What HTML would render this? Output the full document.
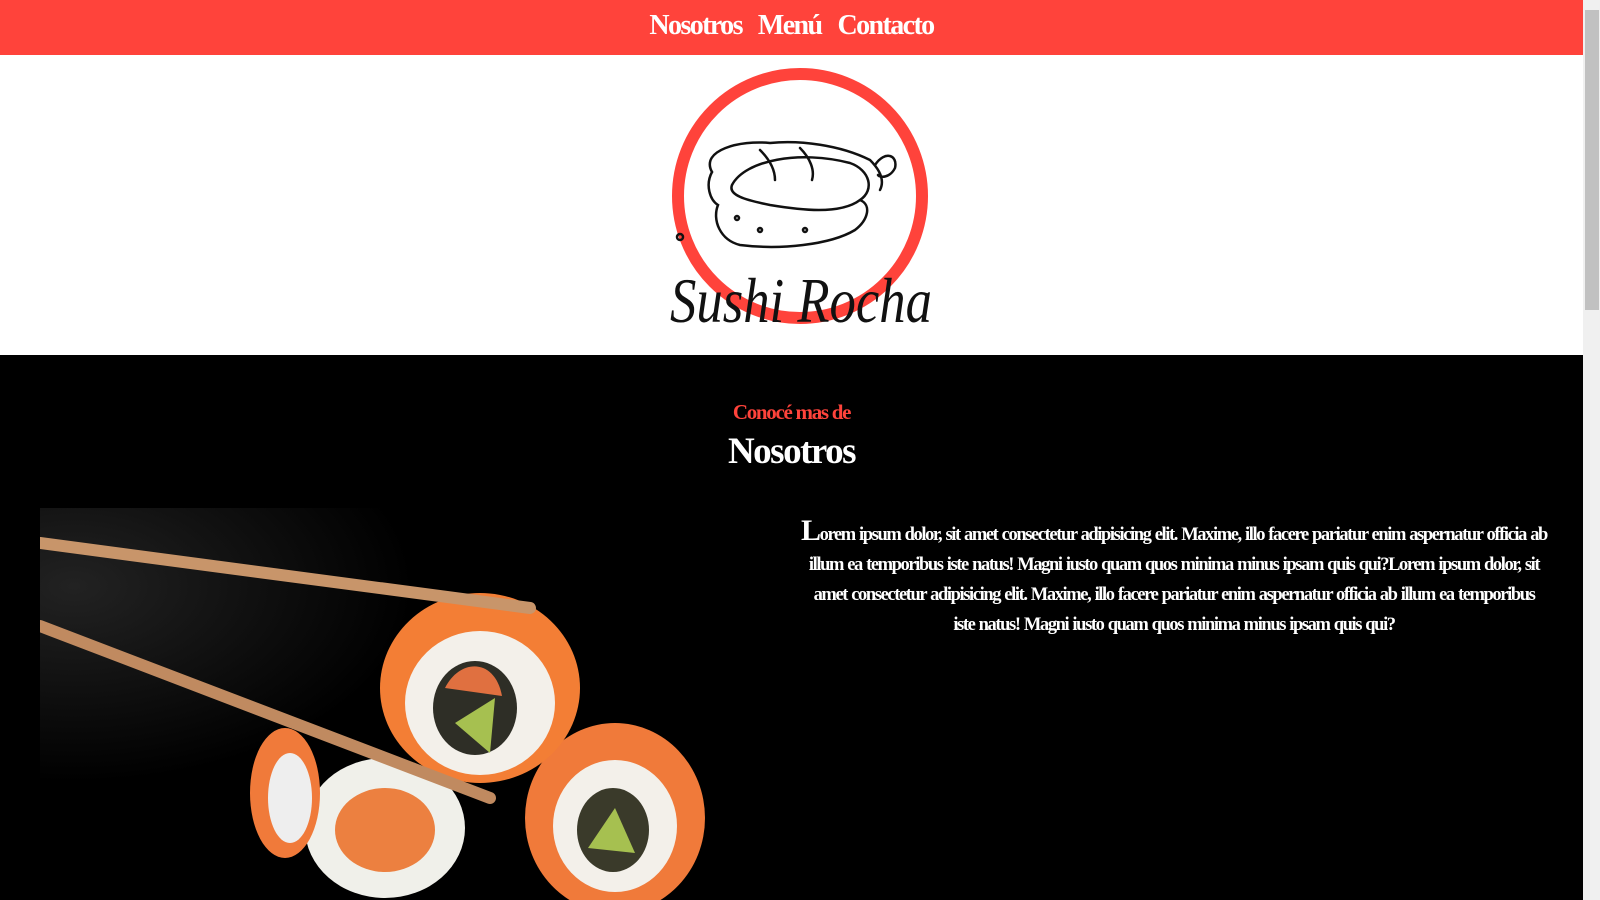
<!DOCTYPE html>
<html><head><meta charset="utf-8"><style>
html,body{margin:0;padding:0;}
body{width:1600px;height:900px;overflow:hidden;background:#000;position:relative;font-family:"Liberation Serif",serif;}
.nav{position:absolute;left:0;top:0;width:1583px;height:55px;background:#ff433b;text-align:center;}
.nav span{display:inline-block;color:#fff;font-weight:bold;font-size:28px;letter-spacing:-1.6px;line-height:52px;margin:0 8px;}
.logo{position:absolute;left:0;top:55px;width:1583px;height:300px;background:#fff;}
.sb{position:absolute;left:1583px;top:0;width:17px;height:900px;background:#f0f0f0;}
.thumb{position:absolute;left:1585px;top:10px;width:14px;height:300px;background:#c1c1c1;}
h3{position:absolute;top:400px;left:0;width:1583px;text-align:center;margin:0;color:#ff433b;font-size:21px;letter-spacing:-1.3px;font-weight:bold;}
h2{position:absolute;top:430px;left:0;width:1583px;text-align:center;margin:0;color:#fff;font-size:37px;font-weight:bold;letter-spacing:-1.5px;}
p{position:absolute;left:780px;top:516px;width:788px;margin:0;color:#fff;text-align:center;font-weight:bold;font-size:18.5px;line-height:30px;letter-spacing:-1.4px;word-spacing:1px;white-space:nowrap;}
p b:first-child{font-size:30px;}
</style></head><body>
<div class="nav"><span>Nosotros</span><span>Menú</span><span>Contacto</span></div>
<div class="logo">
<svg width="1583" height="300" viewBox="0 55 1583 300">
<circle cx="800" cy="196" r="122" fill="none" stroke="#ff433b" stroke-width="12"/>
<g fill="none" stroke="#111" stroke-width="2.5" stroke-linecap="round">
<path d="M712 172 C700 150 740 140 770 143 C800 140 840 145 870 160 C880 170 885 180 880 190"/>
<path d="M732 185 C745 160 800 150 850 163 C870 170 875 190 860 200 C840 215 800 210 770 205 C745 200 728 195 732 185Z"/>
<path d="M712 172 C705 185 710 200 718 205 C712 220 720 240 740 245 C780 250 830 245 855 230 C868 220 872 205 860 200"/>
<path d="M760 150 C770 160 775 170 775 180 M800 148 C810 158 815 170 812 180"/>
<path d="M875 165 C885 150 898 155 895 168 C890 178 880 178 878 175"/>
<circle cx="737" cy="218" r="2"/><circle cx="760" cy="230" r="2"/><circle cx="805" cy="230" r="2"/><circle cx="680" cy="237" r="3"/>
</g>
<text x="670" y="322" font-family="Liberation Serif,serif" font-style="italic" font-size="64" fill="#111" textLength="262" lengthAdjust="spacingAndGlyphs">Sushi Rocha</text>
</svg>
</div>
<h3>Conocé mas de</h3>
<h2>Nosotros</h2>
<svg style="position:absolute;left:40px;top:508px" width="680" height="392">
<defs><radialGradient id="g" cx="0.05" cy="0.2" r="0.5"><stop offset="0" stop-color="#222"/><stop offset="1" stop-color="#000"/></radialGradient></defs>
<rect width="680" height="392" fill="url(#g)"/>
<g>
<ellipse cx="575" cy="310" rx="90" ry="95" fill="#f07a3a"/><ellipse cx="575" cy="318" rx="62" ry="66" fill="#f3f0ea"/><ellipse cx="573" cy="322" rx="36" ry="42" fill="#3a3a2a"/><path d="M548 340 L575 300 L595 345 Z" fill="#a6c050"/>
<ellipse cx="345" cy="320" rx="80" ry="70" fill="#f0f0ea"/><ellipse cx="345" cy="322" rx="50" ry="42" fill="#ec8040"/>
<ellipse cx="245" cy="285" rx="35" ry="65" fill="#f07a3a"/><ellipse cx="250" cy="290" rx="22" ry="45" fill="#eee"/>
<ellipse cx="440" cy="180" rx="100" ry="95" fill="#f37e35"/><ellipse cx="440" cy="195" rx="75" ry="72" fill="#f3f0ea"/><ellipse cx="435" cy="200" rx="42" ry="47" fill="#2e2e26"/><path d="M405 180 C420 150 455 150 462 188 Z" fill="#e07040"/><path d="M415 215 L455 190 L450 245 Z" fill="#a6c050"/>
</g>
<path d="M0 35 L490 100" stroke="#c8956a" stroke-width="12" stroke-linecap="round"/>
<path d="M0 118 L450 290" stroke="#c08a60" stroke-width="12" stroke-linecap="round"/>
</svg>
<p><b>L</b>orem ipsum dolor, sit amet consectetur adipisicing elit. Maxime, illo facere pariatur enim aspernatur officia ab<br>illum ea temporibus iste natus! Magni iusto quam quos minima minus ipsam quis qui?Lorem ipsum dolor, sit<br>amet consectetur adipisicing elit. Maxime, illo facere pariatur enim aspernatur officia ab illum ea temporibus<br>iste natus! Magni iusto quam quos minima minus ipsam quis qui?</p>
<div class="sb"></div><div class="thumb"></div>
</body></html>
